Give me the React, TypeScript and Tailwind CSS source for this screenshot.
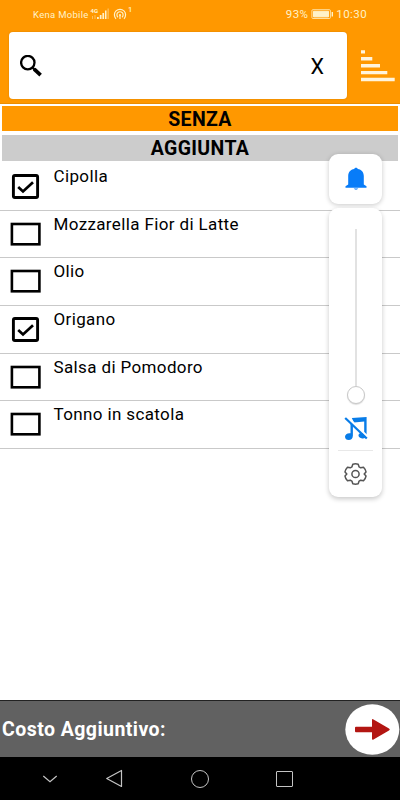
import React from 'react';

interface Ingredient {
  name: string;
  checked: boolean;
}

const ingredients: Ingredient[] = [
  { name: 'Cipolla', checked: true },
  { name: 'Mozzarella Fior di Latte', checked: false },
  { name: 'Olio', checked: false },
  { name: 'Origano', checked: true },
  { name: 'Salsa di Pomodoro', checked: false },
  { name: 'Tonno in scatola', checked: false },
];

function StatusBar() {
  return (
    <div className="flex h-7 items-start pl-[33px] pr-[33px] pt-[7px] text-[#fff2c9]">
      <span className="w-[57px] whitespace-nowrap text-[9.5px] leading-[15px] tracking-[0.3px]">Kena Mobile</span>
      <svg className="h-3 w-[19px]" viewBox="0 0 19 12" fill="currentColor">
        <text x="0.5" y="5.8" fontSize="6" fontWeight="800">4G</text>
        <path d="M7 10h1.8v2H7zM9.8 8h1.7v4H9.8zM12.4 6h1.7v6h-1.7zM15 3.5h1.5V12H15z" />
        <path d="M2 9h1v3H2zM4.5 8h1v4h-1zM17.5 1.5h1.3V12h-1.3z" opacity=".45" />
      </svg>
      <svg className="ml-1 mt-px h-3 w-[14px]" viewBox="0 0 14 12" fill="none" stroke="currentColor" strokeWidth="1.2">
        <path d="M3 10.8A5.6 5.6 0 1 1 11 10.8M5 9.2A3.1 3.1 0 1 1 9 9.2" />
        <circle cx="7" cy="7" r="1" fill="currentColor" stroke="none" />
        <path d="M7 7v4" />
      </svg>
      <span className="ml-px -mt-[2px] text-[7.5px] font-medium leading-[9px]">1</span>
      <span className="ml-auto text-[11.5px] leading-[15px] tracking-[0.4px]">93%</span>
      <svg className="ml-[3px] mt-[2px] h-[10px] w-[23px]" viewBox="0 0 23 10" fill="none" stroke="currentColor">
        <rect x="0.9" y="0.7" width="18.5" height="8.8" rx="1" strokeWidth=".8" />
        <path d="M2.5 2.3h15v5.600h-15z" fill="currentColor" />
        <path d="M21.3 3v4.5" strokeWidth="1.4" />
      </svg>
      <span className="ml-[2px] text-[11.5px] leading-[15px] tracking-[0.4px]">10:30</span>
    </div>
  );
}

function SearchHeader() {
  return (
    <div className="flex h-[76px] border-b border-[#eb8d00] pl-[9px] pt-1">
      <div className="flex h-[67px] w-[338px] items-center rounded-[4px] bg-white pl-[11px] pr-[23px] shadow-[0_0_2px_#9b650066]">
        <svg className="h-[22px] w-[22px]" viewBox="0 0 22 22" fill="none" stroke="#000">
          <circle cx="7.8" cy="7.6" r="6.7" strokeWidth="2.3" />
          <path d="M12.7 12.7l2.2 2.2" strokeWidth="2.3" />
          <path d="M14.2 14.2l6.4 6" strokeWidth="3.7" />
        </svg>
        <span className="ml-auto pt-[3px] text-[21.5px] leading-none">X</span>
      </div>
      <svg className="ml-[14px] mt-[18px] h-8 w-[34px]" viewBox="0 0 34 32" fill="#fff4dc">
        <path d="M0 .2h4v3.4H0zM0 7.1h11.3v3.4H0zM0 14h19v3.4H0zM0 20.9h26.3v3.4H0zM0 27.8h33.7v3.5H0z" />
      </svg>
    </div>
  );
}

function Checkbox({ checked }: { checked: boolean }) {
  return (
    <svg className="mt-[11px] h-[26px] w-[31px] shrink-0" viewBox="0 0 31 26" fill="none" stroke="#000">
      {checked ? (
        <>
          <rect x="3.4" y="1.5" width="24.2" height="22" rx="1.5" strokeWidth="2.9" />
          <path d="M8.2 13l4.8 4.5 10-9.3" strokeWidth="2.7" />
        </>
      ) : (
        <rect x="1.9" y="2" width="27.5" height="20.3" strokeWidth="2.6" />
      )}
    </svg>
  );
}

function VolumePanel() {
  return (
    <div className="absolute left-[329px] top-[154px] flex w-[53px] flex-col gap-1">
      <div className="flex h-[50px] items-center justify-center rounded-[9px] bg-white shadow-[0_1px_5px_#00000038]">
        <svg className="h-6 w-[22px]" viewBox="0 0 22 24" fill="#087cf8">
          <path d="M11 .8c-1 0-1.7.6-1.8 1.2C5.5 2.6 3.2 5.3 3.2 9v8.5L.5 19.2V20.7h21v-1.5L18.8 17.5V9c0-3.7-2.3-6.4-6-7C12.7 1.4 12 .8 11 .8zM8.7 21.6a2.5 1.8 0 0 0 4.6 0z" />
        </svg>
      </div>
      <div className="flex h-[289px] flex-col items-center rounded-[9px] bg-white pt-[21px] shadow-[0_2px_5px_#00000038]">
        <div className="h-[157px] w-[2px] bg-[#e2e2e2]" />
        <div className="h-[18px] w-[18px] rounded-full border border-[#c8c8c8] bg-white shadow-[0_1px_1px_#00000022]" />
        <svg className="mt-3 h-[25px] w-6" viewBox="0 0 24 25">
          <g fill="#087ce8">
            <path d="M7.8 2L22.6 1V18.5C22.6 21.5 20 23 17.5 22.3C15.5 22 14.2 20.5 14.5 19C15 17 17.5 16.3 20.2 16.8V5.5L10 6.5z" />
            <path d="M6.5 6L8.9 8.5V19.5C8.9 22.5 7 24 4.8 24C2.5 24 1 22.7 1 20.7C1 18.5 3.5 16.8 6.5 17.3z" />
          </g>
          <path d="M2.5.5L24 21" stroke="#fff" strokeWidth="2.2" />
          <path d="M1.2 2L22.8 22.5" stroke="#087ce8" strokeWidth="2.2" />
        </svg>
        <div className="mt-[9px] h-px w-[35px] bg-[#e8e8e8]" />
        <svg className="mt-3 h-[22px] w-[23px]" viewBox="0 0 23 22" fill="none" stroke="#555" strokeWidth="1.5" strokeLinejoin="round">
          <path d="M8.8 1.2Q11.5.5 14.2 1.2L15.1 3.9L16.7 4.8L19.5 4.2Q21.6 6.3 22 8.9L20.2 11L22 13.1Q21.6 15.7 19.5 17.8L16.7 17.2L15.1 18.1L14.2 20.8Q11.5 21.5 8.8 20.8L7.9 18.1L6.3 17.2L3.5 17.8Q1.4 15.7 1 13.1L2.8 11L1 8.9Q1.4 6.3 3.5 4.2L6.3 4.8L7.9 3.9Z" />
          <circle cx="11.5" cy="11" r="3.6" />
        </svg>
      </div>
    </div>
  );
}

function NavigationBar() {
  return (
    <div className="flex h-[43px] items-center bg-black text-[#c4c4c4]">
      <svg className="ml-[42px] h-2 w-4" viewBox="0 0 16 8" fill="none" stroke="currentColor" strokeWidth="1.2">
        <path d="M1.3 1l6.7 5.8L14.7 1" />
      </svg>
      <svg className="ml-[47px] h-[19px] w-[19px]" viewBox="0 0 19 19" fill="none" stroke="currentColor" strokeWidth="1.2" strokeLinejoin="round">
        <path d="M16.5 1.5v16L1.7 9.5z" />
      </svg>
      <div className="ml-[67px] h-[18px] w-[18px] rounded-full border border-current" />
      <div className="ml-[67px] h-4 w-[17px] rounded-[1px] border border-current" />
    </div>
  );
}

export default function App() {
  return (
    <div className="relative flex h-[800px] w-[400px] flex-col overflow-hidden bg-white font-['Roboto',sans-serif] text-black">
      <div className="bg-[#ff9800]">
        <StatusBar />
        <SearchHeader />
      </div>
      <div className="flex flex-col gap-1 px-[2px] pt-[2px] text-center text-[19.5px] font-bold leading-[27px] tracking-[0.35px]">
        <h1 className="h-[25px] bg-[#ff9800]">SENZA</h1>
        <h2 className="h-[26px] bg-[#ccc] leading-[28px]">AGGIUNTA</h2>
      </div>
      <ul className="pt-[2px]">
        {ingredients.map((item) => (
          <li key={item.name} className="flex h-[47.7px] border-b border-[#c9c9c9] pl-[10px]">
            <Checkbox checked={item.checked} />
            <span className="ml-[12.5px] mt-[3px] text-[17px] leading-5 tracking-[0.37px]">{item.name}</span>
          </li>
        ))}
      </ul>
      <footer className="mt-auto">
        <div className="flex h-[57px] items-center justify-between border-t border-[#222] bg-[#616161] pl-[2px]">
          <span className="pt-[2px] text-[19.5px] font-bold tracking-[0.45px] text-white">Costo Aggiuntivo:</span>
          <button className="h-[51px] w-[55px]" aria-label="Avanti">
            <svg viewBox="0 0 55 51">
              <ellipse cx="27.3" cy="25.5" rx="27" ry="25.3" fill="#fff" />
              <path d="M11 22.8h16V16q0-1.5 1.5-.6L44 24.5q1.7 1 0 2L28.5 35.5q-1.5.8-1.5-.8V28.300H11q-1 0-1-1v-3.5q0-1 1-1z" fill="#b31612" />
            </svg>
          </button>
        </div>
        <NavigationBar />
      </footer>
      <VolumePanel />
    </div>
  );
}
